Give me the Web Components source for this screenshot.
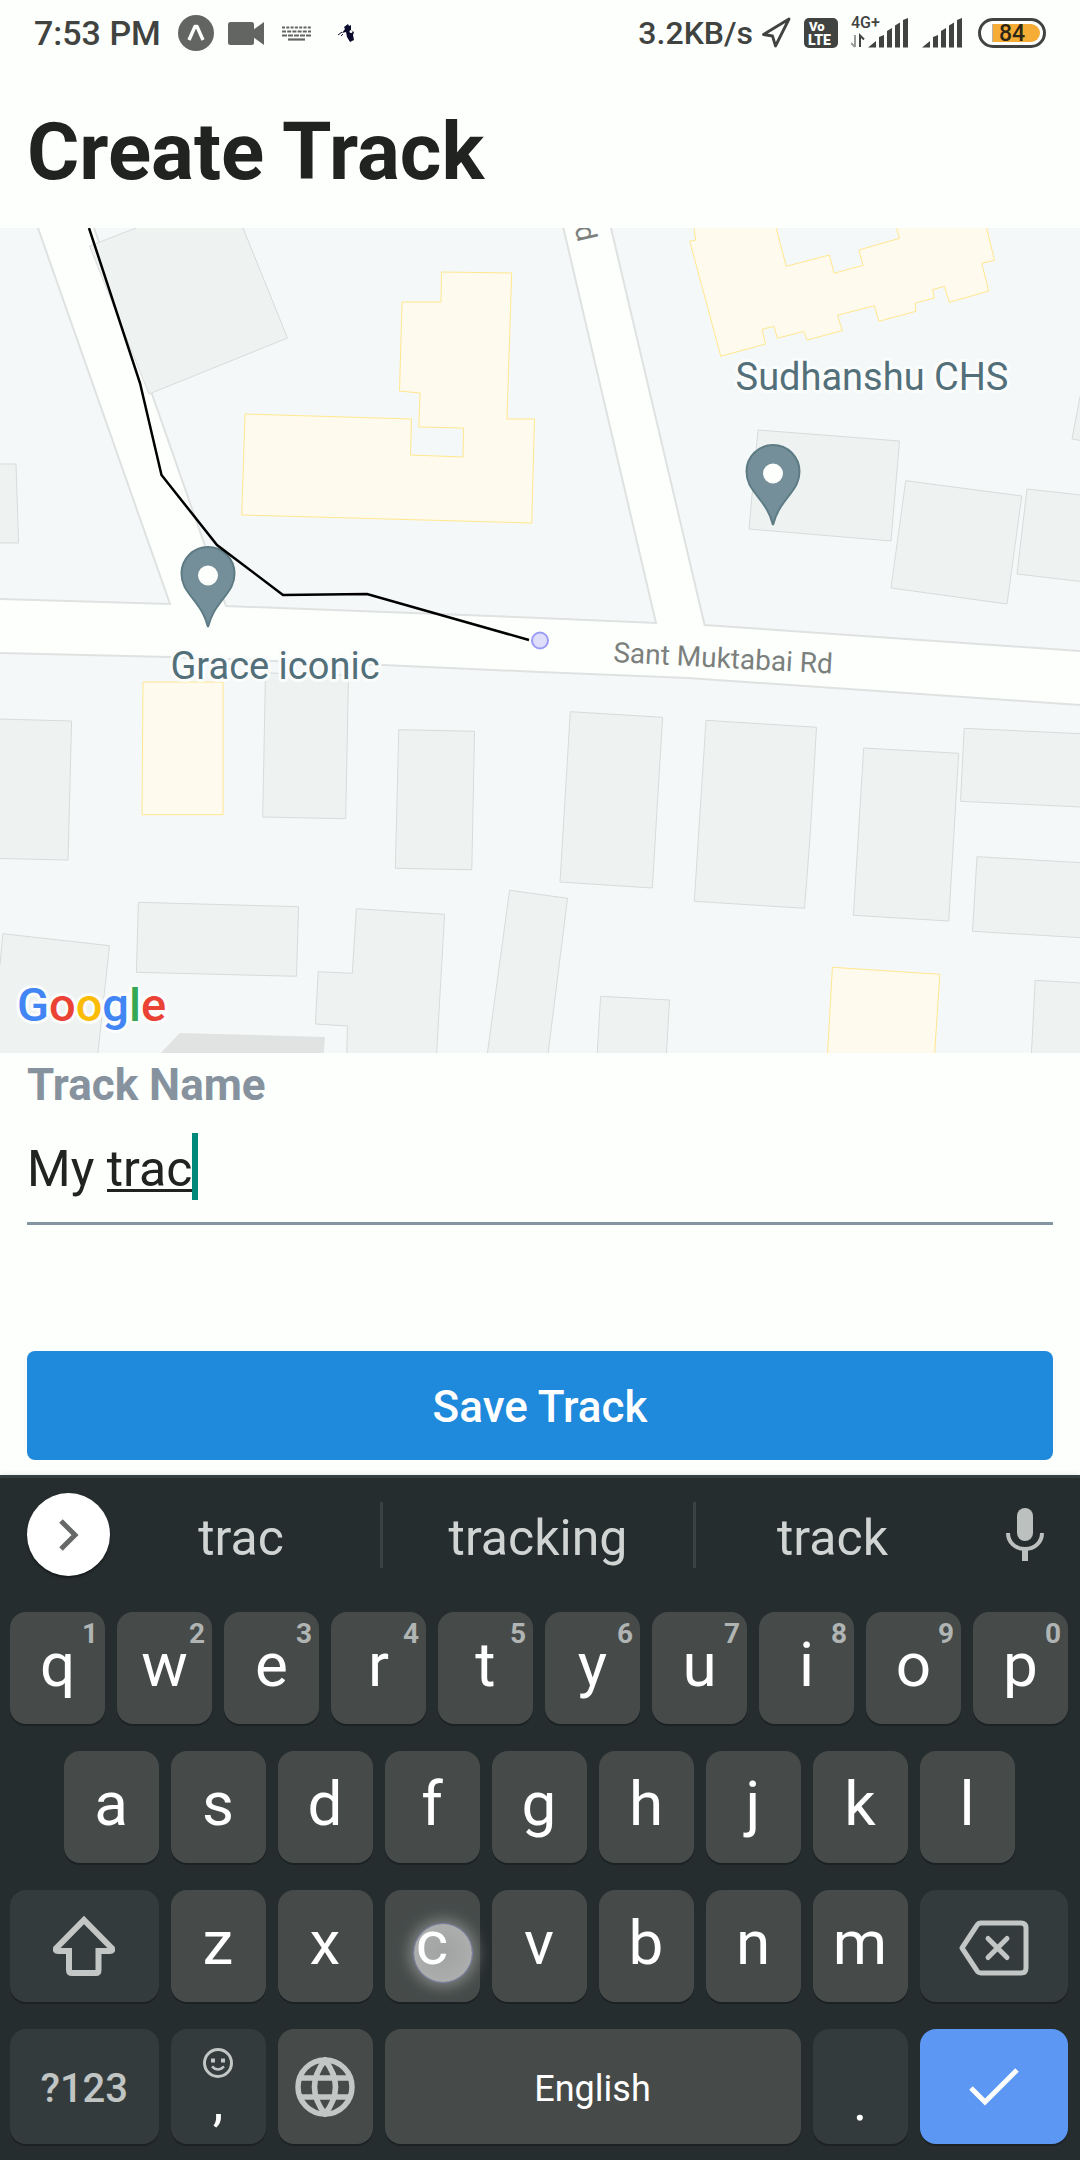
<!DOCTYPE html>
<html lang="en">
<head>
<meta charset="utf-8">
<meta name="viewport" content="width=device-width, initial-scale=1">
<title>Create Track</title>
<style>
  html, body { margin: 0; }
  body {
    min-height: 100vh;
    background: #fdfffd;
    color: #20231f;
    font-family: Roboto, "Noto Sans", sans-serif;
  }
</style>
</head>
<body>
<track-app></track-app>

<script>
const define = (name, html, setup) => {
  const template = document.createElement('template');
  template.innerHTML = html;
  customElements.define(name, class extends HTMLElement {
    constructor() {
      super();
      this.attachShadow({ mode: 'open' }).append(template.content.cloneNode(true));
    }
    connectedCallback() {
      if (setup && !this.ready) { this.ready = true; setup(this, this.shadowRoot); }
    }
  });
};

/* ---------- status bar ---------- */
define('status-bar', `
<style>
  :host { display: flex; justify-content: space-between; align-items: center; height: 66px; padding: 0 34px;
    color: #40433f; font-weight: 500; line-height: 39px; white-space: nowrap; }
  .side { display: flex; align-items: center; gap: 14px; font-size: 34px; }
  .side + .side { gap: 13px; font-size: 32px; }
  .clock { padding-right: 3px; }
  .speed { display: flex; align-items: center; gap: 8px; }
  svg { display: block; flex: none; }
  text { font-family: Roboto, sans-serif; }
</style>
<div class="side">
  <span class="clock">7:53 PM</span>
  <svg width="36" height="36" viewBox="0 0 36 36" aria-hidden="true"><circle cx="18" cy="18" r="18" fill="#636562"/><path d="M11 25 17 11.500h2L25 25" fill="none" stroke="#fdfffd" stroke-width="3.400" stroke-linejoin="round"/></svg>
  <svg width="36" height="36" viewBox="0 0 36 36" aria-hidden="true" fill="#636562"><rect y="7" width="26" height="23" rx="2.500"/><path d="M25 15 36 7V30L25 22z"/></svg>
  <svg width="36" height="36" viewBox="0 0 36 36" aria-hidden="true" stroke="#636562" stroke-width="2.200" fill="none"><path d="M4 12.500H33" stroke-dasharray="3 1.300"/><path d="M4 16.500H33" stroke-dasharray="4 1.200"/><path d="M4 20.500H33" stroke-dasharray="5 1"/><path d="M10 24.500H27"/></svg>
  <svg width="36" height="36" viewBox="0 0 36 36" aria-hidden="true"><path d="M16 12l4-3 1 2 2-1 0 5 3 2-1 3 1 5-4 2-3-5-1-5-4 1 3-4z" fill="#0b0b2c"/><circle cx="23" cy="16.500" r="1.500" fill="#fdfffd"/><path d="M10 20l4-3M13 21l2-2" stroke="#0b0b2c"/></svg>
</div>
<div class="side">
  <span class="speed"><span>3.2KB/s</span>
  <svg width="30" height="32" viewBox="0 0 30 32" aria-hidden="true"><path d="M28 2 2.500 17.500 11.500 19 14.500 29z" fill="none" stroke="#40433f" stroke-width="2.800" stroke-linejoin="round"/></svg></span>
  <svg width="34" height="30" viewBox="0 0 34 30" fill="#fdfffd" font-weight="900"><rect width="34" height="30" rx="5" fill="#40433f"/><text x="5" y="13" font-size="13">Vo</text><text x="4" y="27" font-size="14">LTE</text></svg>
  <svg width="58" height="42" viewBox="0 -5 58 42" fill="#40433f"><text x="0" y="11" font-size="16">4G+</text><path d="M4 18v12M4 30 0 26" stroke="#9a9c99" stroke-width="2" fill="none"/><path d="M9 30V18.500L13 22.500" stroke="#40433f" stroke-width="2" fill="none"/><path d="M17 30.500 25 24v6.500zM28 20l5-2v12.500h-5zM36 14l5-3v19.500h-5zM44 8.500l5-3v25h-5zM52 3l5-2v29.500h-5z"/></svg>
  <svg width="43" height="32" viewBox="17 0 43 32" fill="#40433f" aria-hidden="true"><path d="M17 30.500 25 24v6.500zM28 20l5-2v12.500h-5zM36 14l5-3v19.500h-5zM44 8.500l5-3v25h-5zM52 3l5-2v29.500h-5z"/></svg>
  <svg width="68" height="30" viewBox="0 0 68 30"><rect x="1.500" y="1.500" width="65" height="27" rx="13.500" fill="#fdfffd" stroke="#40433f" stroke-width="3"/><path d="M14 6H53a9 9 0 0 1 0 18H14z" fill="#f5ad35"/><path d="M14.500 6V24" stroke="#b9b4a5"/><text x="34" y="23" text-anchor="middle" font-size="23" fill="#2d2718">84</text></svg>
</div>`);

/* ---------- page heading ---------- */
define('page-title', `
<style>
  :host { display: block; padding: 39px 27px 29px; }
  h1 { margin: 0; font-size: 80px; line-height: 94px; font-weight: 700; }
</style>
<h1><slot></slot></h1>`);

/* ---------- map ---------- */
define('track-map', `
<style>
  :host { display: block; }
  svg { display: block; width: 100%; height: auto; background: #f5f8f8; }
  text { font-family: Roboto, sans-serif; paint-order: stroke; stroke: #fbfdfc; stroke-width: 6px; stroke-linejoin: round; }
  .road { fill: #fdfffd; }
  .edge { fill: none; stroke: #dfe2e1; stroke-width: 2; }
  .grey { fill: #eef2f1; stroke: #d8dbda; }
  .shop { fill: #fffaee; stroke: #ffe78f; }
  .place { fill: #53707a; font-size: 38px; }
  .street { fill: #7b807d; font-size: 28px; stroke: none; }
</style>
<svg viewBox="0 0 1080 825" role="img" aria-label="Map">
  <path class="road" d="M38 0 170 376 0 371V425L170 429 383 437 540 444 688 450 1080 477V423L704.600 397 611 0H563.400L656 395 540 390 226 378 94 0z"/>
  <path class="edge" d="M38 0 170 376 0 371M0 425 170 429 383 437 540 444 688 450 1080 477M1080 423 704.600 397 611 0M563.400 0 656 395 540 390 226 378 94 0"/>
  <g class="grey">
    <path d="M136 0 89.500 18 149 166 287.500 110 243 0"/>
    <path d="M-1 236H16L18.600 315H-1"/>
    <path d="M758 202 899.500 213 891 313 749 301z"/>
    <path d="M905.700 252.700 1021.800 268 1007 376 891 360z"/>
    <path d="M1081 267 1027 261 1017 346 1081 353.500"/>
    <path d="M1081 165 1080 169 1072 211 1081 212.500"/>
    <path d="M-1 491 71.600 493 68 632-1 630.500"/>
    <path d="M265.500 445 348.500 447 345.700 590.700 262.700 589z"/>
    <path d="M398.800 501.700 474.500 503.300 471.800 641.700 395.300 640.300z"/>
    <path d="M138.400 674.300 298.600 678.700 296.500 748.300 136.400 744.300z"/>
    <path d="M0 737 2.800 705.700 109.500 717.700 97.800 826H-1"/>
    <path d="M436.600 826 444.600 686.300 356.400 680.700 352.300 745.300 318.200 743.700 315.400 796 347.500 798 346.800 826"/>
    <path d="M487.300 826 509.600 662.300 567.500 670.300 548 826"/>
    <path d="M570.300 483.700 662.600 489.300 652.300 660 560 654z"/>
    <path d="M706 492.300 816.500 499.300 810 610 804.500 680.300 694.300 673.300z"/>
    <path d="M863.700 520 958.700 525.300 948.700 693 853.400 687.300z"/>
    <path d="M1081 505.700 964.200 500.300 960.500 573.300 1081 579"/>
    <path d="M1081 634.700 977 628.700 972.500 703.300 1081 709.700"/>
    <path d="M597.200 826 600.600 768.300 669.500 772 666.400 826"/>
    <path d="M1081 755 1035.200 752.300 1031.400 826H1081z"/>
  </g>
  <path d="M179.800 805 325 809 323.700 825H160.800z" fill="#e1e3e2"/>
  <g class="shop">
    <path d="M441.500 44 511.700 45 507 191 534.500 191 531.700 295 241.700 287 245 186 411.500 191 410.500 227 463 229 463.500 200 418.700 199 420 165 399.500 163 402 74H441z"/>
    <path d="M694 0 695.600 12 689.800 13.300 720.800 128.300 765.500 116 762 101.300 774 98.300 777.300 110.300 803.800 103.300 806.900 112 842.300 102.700 837.500 87.300 874.400 77.700 878.800 93.300 916 83.300 915.300 75 934.300 70 932.600 61.700 944.300 58.300 949.400 74.300 988.700 63 981.800 35.300 994.500 32.300 986.600 0 986 -2H896L899.500 10.300 858.900 22 863 37.300 834 45.300 829.300 27 786.200 38.300 776.200 0 776 -2H694z"/>
    <path d="M143 454H223V586.700H142z"/>
    <path d="M827.500 826 832.400 739.300 939.800 746.300 934.600 826"/>
  </g>
  <text class="street" transform="translate(578 15) rotate(77)" text-anchor="end">d</text>
  <text class="street" transform="translate(613 434) rotate(3)">Sant Muktabai Rd</text>
  <text class="place" x="275" y="451" text-anchor="middle">Grace iconic</text>
  <text class="place" x="872" y="162" text-anchor="middle">Sudhanshu CHS</text>
  <defs>
    <g id="pin">
      <path d="M0 0C-3-12-8-19-15-28-21-36-26.500-42-26.500-53.500A26.500 26.500 0 0 1 26.500-53.500C26.500-42 21-36 15-28 8-19 3-12 0 0z" fill="#758f9a" stroke="#5d7b84" stroke-width="2"/>
      <circle cy="-51.500" r="10" fill="#fdfffd"/>
    </g>
  </defs>
  <use href="#pin" x="208" y="399"/>
  <use href="#pin" x="773" y="297"/>
  <path d="M89 0 140 155 161.500 247 217 317 283 367 367 366 529 412" fill="none" stroke="#000" stroke-width="2.500"/>
  <circle cx="540" cy="412.500" r="8" fill="#dedefb" stroke="#9c9cf6" stroke-width="2"/>
  <text x="17" y="793" font-size="47" font-weight="500"><tspan fill="#4285f4">G</tspan><tspan fill="#ea4335">o</tspan><tspan fill="#fbbc05">o</tspan><tspan fill="#4285f4">g</tspan><tspan fill="#34a853">l</tspan><tspan fill="#ea4335">e</tspan></text>
</svg>`);

/* ---------- form ---------- */
define('track-form', `
<style>
  form { display: flex; flex-direction: column; padding: 6px 27px 15px; }
  label { font-size: 44px; line-height: 52px; font-weight: 700; color: #86939e; }
  .field { display: flex; align-items: center; height: 111px; border-bottom: 3px solid #8494a0; }
  .composing { position: relative; display: flex; }
  .composing::after { content: ""; position: absolute; right: 0; bottom: 6px; width: 85px; height: 3px; background: #20231f; }
  input { field-sizing: content; padding: 4px 0 0; border: 0; outline: 0; background: none; color: #20231f;
    font: 400 50px/58px Roboto, sans-serif; }
  .caret { width: 6px; height: 67px; background: #00897b; }
  button { margin-top: 126px; height: 109px; padding: 2px 0 0; border: 0; border-radius: 8px; background: #1f89dc; color: #fff;
    font: 500 44px/52px Roboto, sans-serif; }
</style>
<form>
  <label for="name">Track Name</label>
  <div class="field">
    <span class="composing"><input id="name" type="text" value="My trac" autocomplete="off" spellcheck="false"></span>
    <span class="caret"></span>
  </div>
  <button type="submit">Save Track</button>
</form>`, (host, root) => {
  root.querySelector('form').addEventListener('submit', e => e.preventDefault());
});

/* ---------- one key ---------- */
define('key-cap', `
<style>
  :host { display: block; grid-column: span 2; }
  :host([wide]) { grid-column: span 3; }
  :host([space]) { grid-column: span 8; }
  :host([indent]) { grid-column: 2 / span 2; }
  button { position: relative; display: flex; align-items: center; justify-content: center; box-sizing: border-box;
    width: calc(100% - 12px); height: 100%; margin: 0 6px; padding: 0 0 6px; border: 0; border-radius: 16px;
    background: #464b4a; color: #fff; box-shadow: 0 2px 0 #1c2223;
    font: 400 62px/72px Roboto, sans-serif; }
  :host([dim]) button { background: #343b3d; }
  :host([accent]) button { background: #5c97f4; }
  :host([icon]) button { padding: 0; }
  :host([mode]) button { padding: 4px 0 0; color: #c0c5c4; font-size: 40px; line-height: 48px; font-weight: 500; }
  :host([space]) button { padding: 4px 0 0; font-size: 36px; line-height: 42px; }
  :host([low]) button { flex-direction: column; justify-content: flex-end; padding: 0 0 18px; font-size: 54px; line-height: 48px; }
  small { position: absolute; top: 6px; right: 7px; font-size: 28px; line-height: 32px; font-weight: 700; color: #b0b5b4; }
  small:empty { display: none; }
  span { position: relative; display: block; }
  :host([touched]) button::before { content: ""; position: absolute; left: calc(50% - 18px); top: 34px; width: 58px; height: 58px;
    border-radius: 50%; background: radial-gradient(#a0a3a2, #a9acab 60%, #b4b7b6);
    box-shadow: 0 0 0 1px #7b7da6, 0 0 14px 5px #7f8482; }
</style>
<button type="button"><small></small><span><slot></slot></span></button>`, (host, root) => {
  root.querySelector('small').textContent = host.getAttribute('hint') || '';
  if (host.hasAttribute('label')) root.querySelector('button').setAttribute('aria-label', host.getAttribute('label'));
});

/* ---------- suggestions ---------- */
define('suggestion-strip', `
<style>
  :host { display: grid; grid-template-columns: 110px 270fr 313fr 276fr 111px; align-items: center; height: 113px; }
  button { border: 0; padding: 0; background: none; color: #d0d5d4; font: 400 50px/66px Roboto, sans-serif; }
  .more { justify-self: end; display: grid; place-items: center; width: 83px; height: 83px; border-radius: 50%;
    background: #fff; box-shadow: 0 2px 2px #161c1d; }
  .word + .word { border-left: 3px solid #3b4243; }
  .word span { display: block; padding-top: 6px; line-height: 60px; }
  .first { padding-right: 8px; }
  .mic { display: grid; place-items: center; }
  svg { display: block; }
</style>
<button class="more" type="button" aria-label="More"><svg width="83" height="83" viewBox="0 0 83 83"><path d="M34 28 48 42 34 56" fill="none" stroke="#666967" stroke-width="5"/></svg></button>
<button class="word first" type="button"><span>trac</span></button>
<button class="word" type="button"><span>tracking</span></button>
<button class="word" type="button"><span>track</span></button>
<button class="mic" type="button" aria-label="Voice input"><svg width="40" height="54" viewBox="0 0 40 54"><rect x="12" y="0" width="16" height="33" rx="8" fill="#bcc1c0"/><path d="M3 25C3 34 10 41 20 41S37 34 37 25" fill="none" stroke="#bcc1c0" stroke-width="4"/><path d="M20 41V53" stroke="#bcc1c0" stroke-width="6"/></svg></button>`);

/* ---------- keyboard ---------- */
define('soft-keyboard', `
<style>
  :host { display: block; background: #262d2f; border-top: 3px solid #343d3f; padding-bottom: 16px; box-shadow: 0 -1px 5px #e6e9e6; }
  .keys { display: grid; grid-template-columns: repeat(20, 1fr); grid-template-rows: 112px 112px 112px 115px; row-gap: 27px; padding: 21px 6px 0 4px; }
  svg { display: block; fill: none; stroke: #c2c6c5; stroke-width: 5; }
  .face { stroke-width: 3; margin: 0 auto; }
</style>
<suggestion-strip></suggestion-strip>
<div class="keys">
  <key-cap hint="1">q</key-cap><key-cap hint="2">w</key-cap><key-cap hint="3">e</key-cap><key-cap hint="4">r</key-cap><key-cap hint="5">t</key-cap><key-cap hint="6">y</key-cap><key-cap hint="7">u</key-cap><key-cap hint="8">i</key-cap><key-cap hint="9">o</key-cap><key-cap hint="0">p</key-cap>
  <key-cap indent>a</key-cap><key-cap>s</key-cap><key-cap>d</key-cap><key-cap>f</key-cap><key-cap>g</key-cap><key-cap>h</key-cap><key-cap>j</key-cap><key-cap>k</key-cap><key-cap>l</key-cap>
  <key-cap wide dim icon label="Shift"><svg width="62" height="60" viewBox="0 0 62 60"><path d="M31 4 59 32.500Q60 35 57 35H45.500V54Q45.500 57 43 57H19Q16 57 16 54V35H5Q2 35 3 32.500z" stroke-width="6"/></svg></key-cap>
  <key-cap>z</key-cap><key-cap>x</key-cap><key-cap touched>c</key-cap><key-cap>v</key-cap><key-cap>b</key-cap><key-cap>n</key-cap><key-cap>m</key-cap>
  <key-cap wide dim icon label="Backspace"><svg width="70" height="60" viewBox="0 -4 70 60" stroke-linejoin="round" stroke-linecap="round" stroke-width="6"><path d="M22 3H62Q67 3 67 8V48Q67 53 62 53H22Q19 53 17.500 50L3 28 17.500 6Q19 3 22 3z"/><path d="M29 18.500 48 37.500M48 18.500 29 37.500"/></svg></key-cap>
  <key-cap wide dim mode>?123</key-cap>
  <key-cap dim low><svg class="face" width="30" height="30" viewBox="0 0 30 30"><circle cx="15" cy="15" r="13.500"/><path d="M9 18.500Q15 24.500 21 18.500" stroke-width="2.500"/><path d="M10 10.500v4M20 10.500v4" stroke-width="4"/></svg>,</key-cap>
  <key-cap icon label="Language"><svg width="60" height="60" viewBox="0 0 60 60"><g stroke-width="5.500"><circle cx="30" cy="30" r="27"/><path d="M4 21H56M4 40H56M30 3Q9 30 30 57Q51 30 30 3z"/></g></svg></key-cap>
  <key-cap space>English</key-cap>
  <key-cap dim low>.</key-cap>
  <key-cap wide accent icon label="Done"><svg width="50" height="38" viewBox="0 0 50 38"><path d="M2 20 16 34 48 2" stroke="#fff"/></svg></key-cap>
</div>`);

/* ---------- screen ---------- */
define('track-app', `
<style>
  :host { display: flex; flex-direction: column; min-height: 100vh; }
  main { flex: 1; }
</style>
<status-bar></status-bar>
<main>
  <page-title>Create Track</page-title>
  <track-map></track-map>
  <track-form></track-form>
</main>
<soft-keyboard></soft-keyboard>`);
</script>
</body>
</html>
